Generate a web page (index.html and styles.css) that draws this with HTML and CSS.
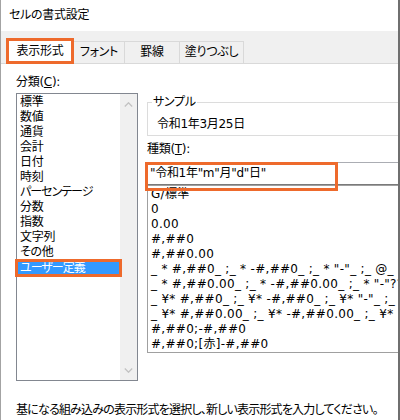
FILE: index.html
```html
<!DOCTYPE html>
<html lang="ja">
<head>
<meta charset="utf-8">
<title>セルの書式設定</title>
<link rel="stylesheet" href="styles.css">
</head>
<body>
<div class="dialog">
  <div class="titlebar">セルの書式設定</div>
  <div class="tabstrip">
    <div class="tab tab-active">表示形式</div>
    <div class="tab tab-font">フォント</div>
    <div class="tab tab-border">罫線</div>
    <div class="tab tab-fill">塗りつぶし</div>
  </div>
  <div class="panel">
    <div class="category">
      <div class="label">分類(<u>C</u>):</div>
      <div class="listbox">
        <ul class="items">
          <li>標準</li>
          <li>数値</li>
          <li>通貨</li>
          <li>会計</li>
          <li>日付</li>
          <li>時刻</li>
          <li class="kana">パーセンテージ</li>
          <li>分数</li>
          <li>指数</li>
          <li>文字列</li>
          <li>その他</li>
          <li class="selected kana">ユーザー定義</li>
        </ul>
        <div class="scrollbar">
          <svg class="arrow" width="9" height="5" viewBox="0 0 9 5"><polyline points="0.8,4.5 4.5,0.8 8.2,4.5" fill="none" stroke="#c2c2c2" stroke-width="1.3"/></svg>
          <svg class="arrow" width="9" height="5" viewBox="0 0 9 5"><polyline points="0.8,0.5 4.5,4.2 8.2,0.5" fill="none" stroke="#c2c2c2" stroke-width="1.3"/></svg>
        </div>
      </div>
    </div>
    <div class="format">
      <fieldset class="sample">
        <legend>サンプル</legend>
        <div class="sample-value">令和1年3月25日</div>
      </fieldset>
      <div class="label type-label">種類(<u>T</u>):</div>
      <div class="type-input">"令和1年"m"月"d"日"</div>
      <ul class="format-list">
        <li>G/標準</li>
        <li>0</li>
        <li>0.00</li>
        <li>#,##0</li>
        <li>#,##0.00</li>
        <li>_ * #,##0_ ;_ * -#,##0_ ;_ * "-"_ ;_ @_ </li>
        <li>_ * #,##0.00_ ;_ * -#,##0.00_ ;_ * "-"??_ ;_ @_ </li>
        <li>_ ¥* #,##0_ ;_ ¥* -#,##0_ ;_ ¥* "-"_ ;_ @_ </li>
        <li>_ ¥* #,##0.00_ ;_ ¥* -#,##0.00_ ;_ ¥* "-"??_ ;_ @_ </li>
        <li>#,##0;-#,##0</li>
        <li>#,##0;[赤]-#,##0</li>
      </ul>
    </div>
  </div>
  <div class="hint">基になる組み込みの表示形式を選択し、新しい表示形式を入力してください。</div>
</div>
</body>
</html>
```

FILE: styles.css
```css
* {
  box-sizing: border-box;
}

html, body {
  margin: 0;
  padding: 0;
  background: #ffffff;
}

body {
  font-family: "DejaVu Sans", "Noto Sans CJK JP", sans-serif;
  font-size: 12px;
  color: #000000;
  font-feature-settings: "palt";
}

.dialog {
  width: 400px;
  height: 420px;
  overflow: hidden;
  background: #ffffff;
  border-left: 1px solid #a3a3a3;
  border-right: 2px solid #6f6f6f;
  letter-spacing: -0.3px;
}

.titlebar {
  height: 31px;
  line-height: 30px;
  padding-left: 8px;
}

.tabstrip {
  height: 33px;
  display: flex;
  align-items: flex-end;
  padding-left: 5px;
  background: #f0f0f0;
  border-bottom: 1px solid #d9d9d9;
}

.tab {
  height: 22px;
  line-height: 20px;
  text-align: center;
  background: #f0f0f0;
  border-top: 1px solid #d9d9d9;
  border-right: 1px solid #d9d9d9;
}

.tab-active {
  flex: 0 0 68px;
  height: 26px;
  margin-bottom: -1px;
  background: #ffffff;
  border: 3px solid #ee6a2c;
  line-height: 20px;
}

.tab-font {
  flex: 0 0 51px;
}

.tab-border {
  flex: 0 0 55px;
}

.tab-fill {
  flex: 0 0 64px;
}

.panel {
  display: grid;
  grid-template-columns: 122px 1fr;
  column-gap: 9px;
  padding: 10px 0 0 15px;
}

.label {
  line-height: 16px;
}

.listbox {
  margin-top: 3px;
  height: 288px;
  display: flex;
  border: 1px solid #828790;
}

.items {
  list-style: none;
  margin: 0;
  padding: 0.5px 0 0;
  flex: 1;
}

.items li {
  height: 15.1px;
  line-height: 15.1px;
  padding-left: 3px;
  white-space: nowrap;
  position: relative;
}

.items li.kana {
  letter-spacing: -1px;
}

.items li.selected {
  background: #3399ff;
  color: #ffffff;
}

.items li.selected::after {
  content: "";
  position: absolute;
  left: -2px;
  right: -2px;
  top: -1.5px;
  bottom: -1.5px;
  border: 3px solid #ee6a2c;
}

.scrollbar {
  width: 17px;
  display: flex;
  flex-direction: column;
  justify-content: space-between;
  align-items: center;
  padding: 8px 0 7px;
  background: #f0f0f0;
}

.arrow {
  display: block;
}

.format {
  min-width: 0;
  padding-top: 20px;
}

.sample {
  margin: 0 -20px 0 0;
  padding: 6px 0 3px 9px;
  min-width: 0;
  border: 1px solid #dcdcdc;
}

.sample legend {
  margin-left: -5px;
  padding: 0 1px;
  line-height: 16px;
}

.sample-value {
  line-height: 16px;
}

.type-label {
  margin-top: 5px;
}

.type-input {
  position: relative;
  margin: 5px -20px 0 0;
  height: 23px;
  line-height: 21px;
  padding-left: 2px;
  border: 1px solid #abadb3;
  border-bottom-color: #7a7a7a;
  white-space: nowrap;
}

.type-input::after {
  content: "";
  position: absolute;
  left: -3px;
  top: -1px;
  width: 187px;
  height: 23px;
  border: 3px solid #ee6a2c;
}

.format-list {
  list-style: none;
  margin: 0 -20px 0 0;
  height: 168px;
  padding: 0.5px 0 0 3px;
  overflow: hidden;
  border: 1px solid #a0a0a0;
  letter-spacing: 0.3px;
}

.format-list li {
  height: 15.1px;
  line-height: 15.1px;
  white-space: pre;
}

.hint {
  margin-top: 21px;
  padding-left: 15px;
  line-height: 16px;
  white-space: nowrap;
  letter-spacing: -0.8px;
}
```
